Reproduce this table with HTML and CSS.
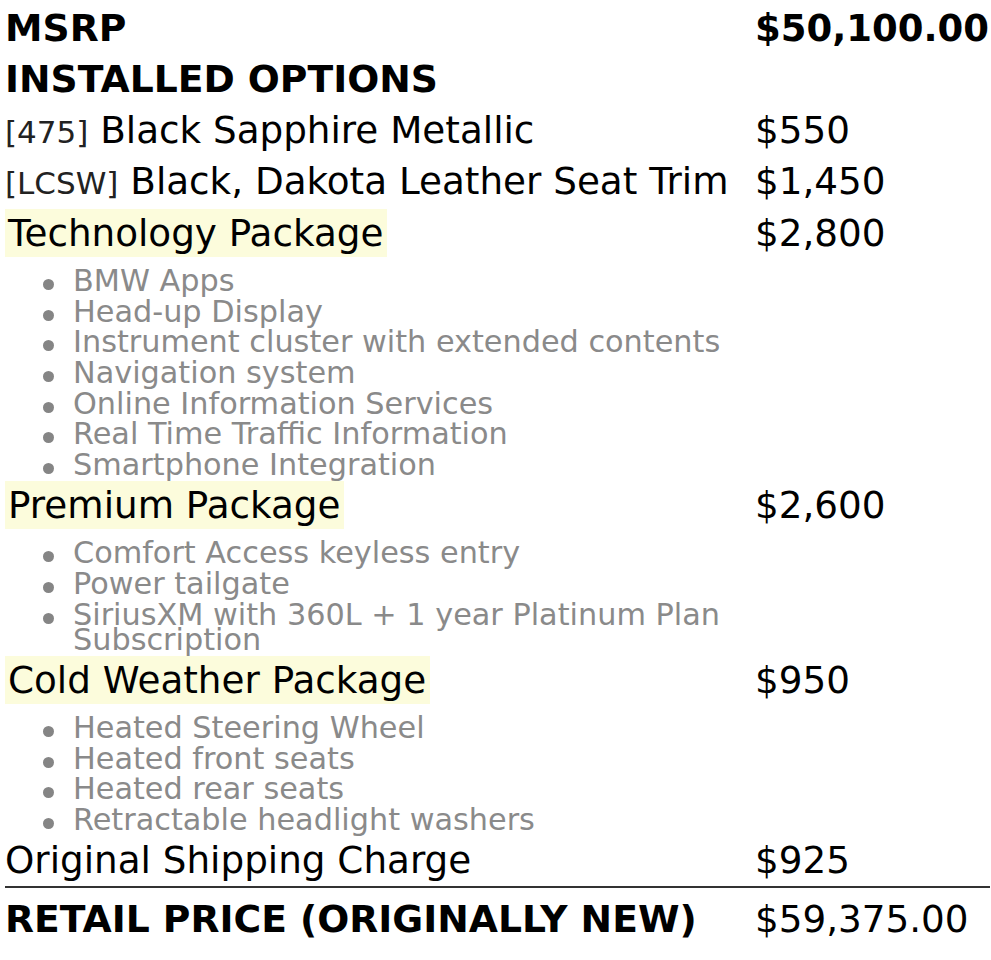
FILE: index.html
```html
<!DOCTYPE html>
<html>
<head>
<meta charset="utf-8">
<link rel="stylesheet" href="styles.css">
</head>
<body>
<div class="sheet">
  <div class="row"><div class="label bold">MSRP</div><div class="price bold-price">$50,100.00</div></div>
  <div class="row"><div class="label bold">INSTALLED OPTIONS</div><div class="price"></div></div>
  <div class="row"><div class="label"><span class="code">[475]</span> Black Sapphire Metallic</div><div class="price">$550</div></div>
  <div class="row"><div class="label"><span class="code">[LCSW]</span> Black, Dakota Leather Seat Trim</div><div class="price">$1,450</div></div>
  <div class="row"><div class="label"><span class="pkg">Technology Package</span></div><div class="price">$2,800</div></div>
  <ul class="items">
    <li>BMW Apps</li>
    <li>Head-up Display</li>
    <li>Instrument cluster with extended contents</li>
    <li>Navigation system</li>
    <li>Online Information Services</li>
    <li>Real Time Traffic Information</li>
    <li>Smartphone Integration</li>
  </ul>
  <div class="row"><div class="label"><span class="pkg">Premium Package</span></div><div class="price">$2,600</div></div>
  <ul class="items">
    <li>Comfort Access keyless entry</li>
    <li>Power tailgate</li>
    <li>SiriusXM with 360L + 1 year Platinum Plan Subscription</li>
  </ul>
  <div class="row"><div class="label"><span class="pkg">Cold Weather Package</span></div><div class="price">$950</div></div>
  <ul class="items">
    <li>Heated Steering Wheel</li>
    <li>Heated front seats</li>
    <li>Heated rear seats</li>
    <li>Retractable headlight washers</li>
  </ul>
  <div class="row"><div class="label">Original Shipping Charge</div><div class="price">$925</div></div>
  <div class="row total"><div class="label bold">RETAIL PRICE (ORIGINALLY NEW)</div><div class="price">$59,375.00</div></div>
</div>
</body>
</html>
```
FILE: styles.css
```css
html, body {
  margin: 0;
  padding: 0;
  background: #fff;
}
body {
  font-family: "DejaVu Sans", "Liberation Sans", sans-serif;
  color: #000;
}
.sheet {
  width: 985px;
  padding: 2.5px 1px 0 5px;
  font-size: 37.3px;
}
.row {
  display: grid;
  grid-template-columns: 750px 1fr;
  height: 41.25px;
  line-height: 41.25px;
  padding: 5px 0;
  white-space: nowrap;
}
.bold {
  font-weight: bold;
  font-size: 37.7px;
}
.bold-price {
  font-weight: bold;
  font-size: 37px;
}
.code {
  font-size: 31px;
  line-height: 1;
  color: #222;
}
.pkg {
  background: #fcfcdc;
  padding: 2px 4px 2px 3px;
}
.items {
  margin: 6.5px 0 0 0;
  padding: 0 0 0 68px;
  width: 660px;
  list-style: none;
  font-size: 30.3px;
  color: #8a8a8a;
}
.items li {
  line-height: 25px;
  padding: 2.83px 0;
}
.items li::before {
  content: "";
  display: inline-block;
  width: 11px;
  height: 11px;
  border-radius: 50%;
  background: #858585;
  margin: 0 19.5px 0 -30.5px;
  vertical-align: 1px;
}
.total {
  border-top: 2px solid #333;
  padding-top: 11px;
}
```
